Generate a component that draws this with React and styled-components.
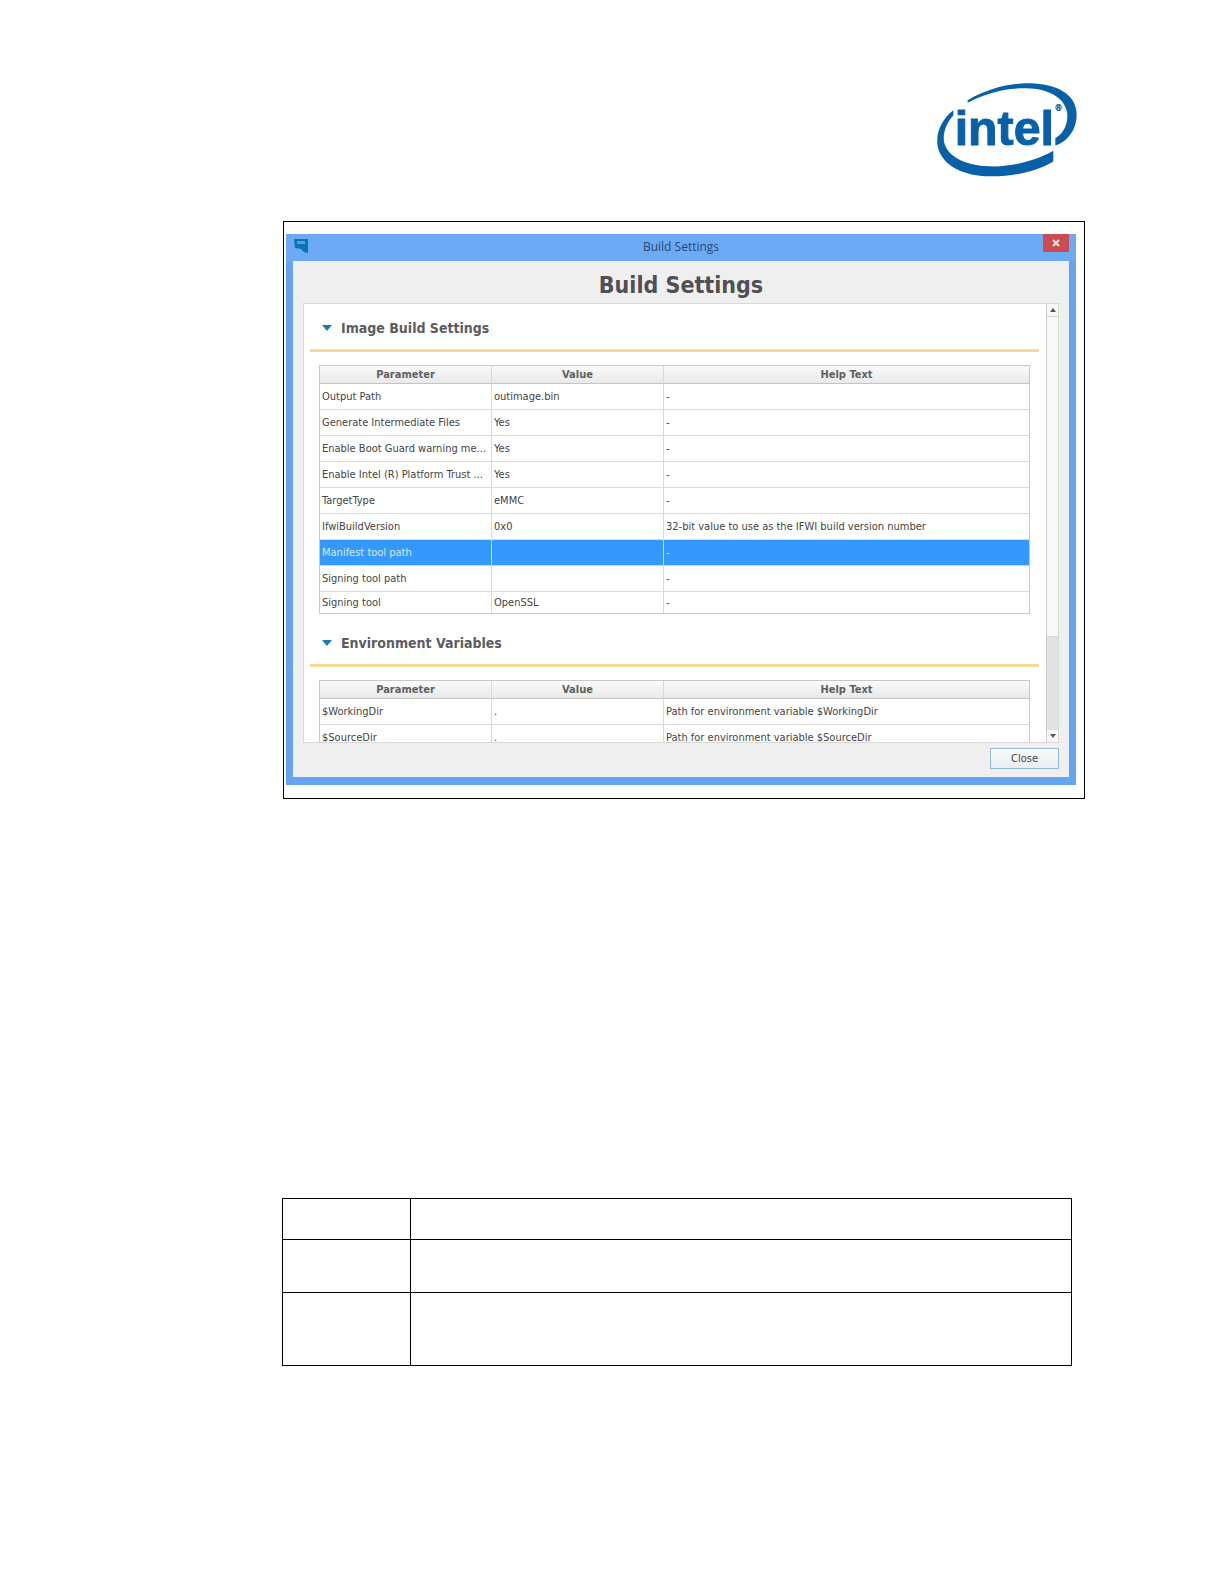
import React, { useState } from 'react'
import styled, { createGlobalStyle, css } from 'styled-components'

const imageSettings = [
  { name: 'Output Path', value: 'outimage.bin', help: '-' },
  { name: 'Generate Intermediate Files', value: 'Yes', help: '-' },
  { name: 'Enable Boot Guard warning me...', value: 'Yes', help: '-' },
  { name: 'Enable Intel (R) Platform Trust ...', value: 'Yes', help: '-' },
  { name: 'TargetType', value: 'eMMC', help: '-' },
  { name: 'IfwiBuildVersion', value: '0x0', help: '32-bit value to use as the IFWI build version number' },
  { name: 'Manifest tool path', value: '', help: '-', selected: true },
  { name: 'Signing tool path', value: '', help: '-' },
  { name: 'Signing tool', value: 'OpenSSL', help: '-', short: true },
]

const environmentVariables = [
  { name: '$WorkingDir', value: '.', help: 'Path for environment variable $WorkingDir' },
  { name: '$SourceDir', value: '.', help: 'Path for environment variable $SourceDir' },
]

const IntelLogo = () => (
  <Logo viewBox="50 38 422 284" role="img" aria-label="intel">
    <path d="M142 98V90C200 56 262 39 320 39C405 39 468 68 471 128C474 176 446 215 407 227V204C430 192 446 164 443 130C437 82 385 55 320 54C252 53 192 71 142 98Z" />
    <path d="M99 120V136C78 157 66 190 71 217C84 268 148 290 222 290C290 289 352 270 401 243V275C350 305 285 320 215 320C128 320 66 288 52 232C44 192 62 148 99 120Z" />
    <LogoText x="103" y="225">intel</LogoText>
    <LogoMark x="407" y="124">®</LogoMark>
  </Logo>
)

const SettingsSection = ({ title, rows }) => {
  const [open, setOpen] = useState(true)
  return (
    <Section>
      <SectionTitle>
        <Toggle type="button" aria-expanded={open} onClick={() => setOpen(!open)}>
          <Triangle viewBox="0 0 10 6" $open={open}><path d="M0 0H10L5 6Z" /></Triangle>
          {title}
        </Toggle>
      </SectionTitle>
      {open && (
        <SettingsTable>
          <colgroup>
            <NameCol />
            <ValueCol />
            <col />
          </colgroup>
          <thead>
            <tr>
              <HeadCell>Parameter</HeadCell>
              <HeadCell>Value</HeadCell>
              <HeadCell>Help Text</HeadCell>
            </tr>
          </thead>
          <tbody>
            {rows.map((row) => (
              <Row key={row.name} $selected={row.selected} $short={row.short}>
                <Cell>{row.name}</Cell>
                <Cell>{row.value}</Cell>
                <Cell>{row.help}</Cell>
              </Row>
            ))}
          </tbody>
        </SettingsTable>
      )}
    </Section>
  )
}

const App = () => {
  return (
    <>
      <GlobalStyle />
      <Header>
        <IntelLogo />
      </Header>
      <main>
        <Figure>
          <Window>
            <TitleBar>
              <AppIcon viewBox="0 0 15 15">
                <path d="M0 0H14V14L10 13L7 10L1 9Z" fill="#0873b5" />
                <path d="M3 2H11V5H3Z" fill="#4fa3d8" />
              </AppIcon>
              <WindowTitle>Build Settings</WindowTitle>
              <WindowClose type="button" aria-label="Close window">
                <svg viewBox="0 0 8 8" width="8" height="8">
                  <path d="M1 1L7 7M7 1L1 7" stroke="#f8e4e4" strokeWidth="2" />
                </svg>
              </WindowClose>
            </TitleBar>
            <Body>
              <Heading>Build Settings</Heading>
              <Panel>
                <PanelContent>
                  <SettingsSection title="Image Build Settings" rows={imageSettings} />
                  <SettingsSection title="Environment Variables" rows={environmentVariables} />
                </PanelContent>
                <ScrollBar>
                  <ScrollButton type="button" aria-label="Scroll up">
                    <svg viewBox="0 0 6 4" width="6" height="4"><path d="M0 4L3 0L6 4Z" /></svg>
                  </ScrollButton>
                  <ScrollThumb />
                  <ScrollButton type="button" aria-label="Scroll down">
                    <svg viewBox="0 0 6 4" width="6" height="4"><path d="M0 0L3 4L6 0Z" /></svg>
                  </ScrollButton>
                </ScrollBar>
              </Panel>
              <Footer>
                <CloseButton type="button">Close</CloseButton>
              </Footer>
            </Body>
          </Window>
        </Figure>
        <BlankTable>
          <tbody>
            <BlankRow $height={41}><LabelCell /><td /></BlankRow>
            <BlankRow $height={53}><LabelCell /><td /></BlankRow>
            <BlankRow $height={73}><LabelCell /><td /></BlankRow>
          </tbody>
        </BlankTable>
      </main>
    </>
  )
}

const GlobalStyle = createGlobalStyle`
  * {
    box-sizing: border-box;
  }
  body {
    margin: 0;
    background-color: #ffffff;
    color: #444444;
    font-family: 'DejaVu Sans Condensed', 'DejaVu Sans', sans-serif;
    font-size: 11px;
  }
  button {
    font: inherit;
    color: inherit;
    padding: 0;
  }
`
const line = css`
  1px solid #d9d9d9
`
const Header = styled.header`
  display: flex;
  justify-content: flex-end;
  padding: 83px 147px 0 0;
`
const Logo = styled.svg`
  width: 140px;
  height: 94px;
  fill: #0860a8;
`
const LogoText = styled.text`
  font-family: 'Liberation Sans', sans-serif;
  font-weight: 700;
  font-size: 146px;
  stroke: #0860a8;
  stroke-width: 3px;
`
const LogoMark = styled.text`
  font-family: Roboto, sans-serif;
  font-weight: 700;
  font-size: 25px;
  stroke: #0860a8;
  stroke-width: 1px;
`
const Figure = styled.section`
  margin: 44px 139px 0 283px;
  padding: 12px 8px 13px 2px;
  border: 1px solid #000000;
`
const Window = styled.div`
  padding: 0 7px 8px;
  background-color: #64a4f1;
`
const TitleBar = styled.div`
  display: grid;
  grid-template-columns: 26px 1fr 26px;
  height: 27px;
  margin: 0 -7px;
  padding: 0 7px;
  background-color: #6caaf5;
`
const AppIcon = styled.svg`
  width: 15px;
  height: 15px;
  margin: 5px 1px;
`
const WindowTitle = styled.span`
  font-family: 'Open Sans', sans-serif;
  font-size: 12px;
  line-height: 26px;
  text-align: center;
  color: #27496f;
`
const WindowClose = styled.button`
  display: flex;
  align-items: center;
  justify-content: center;
  height: 18px;
  border: none;
  background-color: #cb4c50;
`
const Body = styled.div`
  padding: 0 10px 8px;
  background-color: #efefef;
`
const Heading = styled.h1`
  margin: 0;
  font-size: 23px;
  line-height: 40px;
  height: 42px;
  padding-top: 4px;
  text-align: center;
  color: #505054;
`
const Panel = styled.div`
  display: flex;
  height: 440px;
  border: 1px solid #d8d8d8;
  background-color: #ffffff;
`
const PanelContent = styled.div`
  flex: 1;
  min-width: 0;
  overflow: hidden;
  padding: 0 7px 0 6px;
`
const Section = styled.section`
  margin-bottom: 5px;
`
const SectionTitle = styled.h2`
  margin: 0 0 13px;
  border-bottom: 3px solid #f5dc96;
  font-size: 14px;
  color: #5c5c60;
`
const Toggle = styled.button`
  display: flex;
  align-items: center;
  gap: 9px;
  width: 100%;
  height: 45px;
  padding: 3px 0 0 12px;
  border: none;
  background: none;
`
const Triangle = styled.svg`
  width: 10px;
  height: 6px;
  fill: #1b7dab;
  transform: ${({ $open }) => ($open ? 'none' : 'rotate(-90deg)')};
`
const SettingsTable = styled.table`
  width: calc(100% - 18px);
  margin-left: 9px;
  table-layout: fixed;
  border-collapse: separate;
  border-spacing: 0;
  border: 1px solid #c8c8c8;
`
const NameCol = styled.col`
  width: 172px;
`
const ValueCol = styled.col`
  width: 172px;
`
const HeadCell = styled.th`
  height: 18px;
  padding: 1px 0 0;
  line-height: 16px;
  color: #606060;
  background: linear-gradient(#fafafa, #e9e9e9);
  border-bottom: 1px solid #c4c4c4;
  border-right: ${line};
  &:last-child {
    border-right: none;
  }
`
const Cell = styled.td`
  padding: 0 2px;
  line-height: 16px;
  white-space: nowrap;
  overflow: hidden;
  border-bottom: ${line};
  border-right: ${line};
  &:last-child {
    border-right: none;
  }
`
const Row = styled.tr`
  height: ${({ $short }) => ($short ? 21 : 26)}px;
  ${({ $selected }) => $selected && css`
    background-color: #3399ff;
    color: #d6ebff;
  `}
  &:last-child > td {
    border-bottom: none;
  }
`
const ScrollBar = styled.div`
  display: flex;
  flex-direction: column;
  width: 12px;
  border-left: 1px solid #cccccc;
  background-color: #e2e2e4;
`
const ScrollButton = styled.button`
  display: flex;
  align-items: center;
  justify-content: center;
  height: 12px;
  border: none;
  background-color: #f8f8f8;
  fill: #555555;
`
const ScrollThumb = styled.div`
  flex: 0 0 321px;
  margin-bottom: auto;
  border: solid #d4d4d4;
  border-width: 1px 0;
  background-color: #f9f9fb;
`
const Footer = styled.div`
  display: flex;
  justify-content: flex-end;
  padding-top: 5px;
`
const CloseButton = styled.button`
  width: 69px;
  height: 21px;
  border: 1px solid #94b8dc;
  background: linear-gradient(#fafafa, #e8eef4);
`
const BlankTable = styled.table`
  width: calc(100% - 434px);
  margin: 399px 152px 0 282px;
  border-collapse: collapse;
  table-layout: fixed;
  td {
    padding: 0;
    border: 1px solid #000000;
  }
`
const BlankRow = styled.tr`
  height: ${({ $height }) => $height}px;
`
const LabelCell = styled.td`
  width: 128px;
`
export default App
